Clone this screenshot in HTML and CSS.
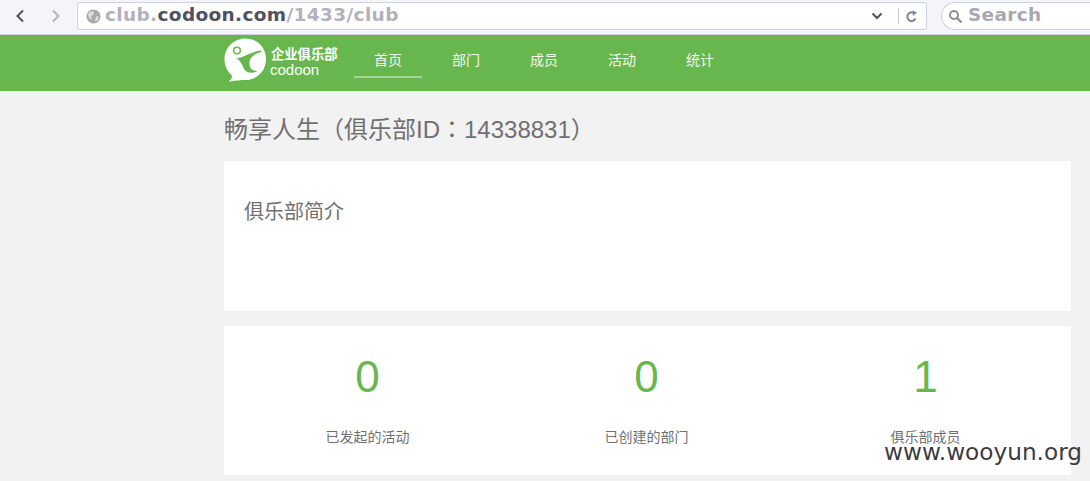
FILE: index.html
```html
<!DOCTYPE html>
<html lang="zh">
<head>
<meta charset="utf-8">
<title>club</title>
<link rel="stylesheet" href="styles.css">
</head>
<body>
<div class="chrome">
  <svg class="nav-ico back" width="12" height="16" viewBox="0 0 12 16"><path d="M9 2.500 3.500 8 9 13.500" fill="none" stroke="#4f5463" stroke-width="2"/></svg>
  <svg class="nav-ico fwd" width="12" height="16" viewBox="0 0 12 16"><path d="M3 2.500 8.500 8 3 13.500" fill="none" stroke="#b4b6bf" stroke-width="2"/></svg>
  <div class="urlbar">
    <svg class="globe" width="15" height="15" viewBox="0 0 15 15"><circle cx="7.500" cy="7.500" r="7" fill="#a9a9a9"/><path d="M3 3.500 7 2 8 5 5 7.500 6 11 3.500 9.500 2 6ZM10 7l3 1-1.500 3.500L9 12.500Z" fill="#dedede"/></svg>
    <span class="url"><span class="dim">club.</span><b class="host">codoon.com</b><span class="dim">/1433/club</span></span>
    <svg class="chev" width="12" height="8" viewBox="0 0 12 8"><path d="M1.500 1.500 6 6l4.500-4.500" fill="none" stroke="#4f5463" stroke-width="2"/></svg>
    <span class="sep"></span>
    <svg class="reload" width="13" height="13" viewBox="0 0 13 13"><path d="M10.500 8.500A4.300 4.300 0 1 1 8.500 2.800" fill="none" stroke="#7c8794" stroke-width="2"/><path d="M7.500 0.500 12 2.500 8 6Z" fill="#7c8794"/></svg>
  </div>
  <div class="search">
    <svg width="15" height="15" viewBox="0 0 15 15"><circle cx="6" cy="6" r="4" fill="none" stroke="#8f8f8f" stroke-width="2"/><path d="M9 9l4.500 4.500" stroke="#8f8f8f" stroke-width="2.400"/></svg>
    <span>Search</span>
  </div>
</div>
<header class="topbar">
  <div class="wrap topbar-in">
    <div class="brand">
      <svg class="logo" width="43" height="44" viewBox="0 0 43 44"><path d="M21.500 0.500C33 .5 42 9.500 42 21C42 33 33 42 21.500 42C17 42 13 42.500 4.500 43.500C8 41 8.500 39 7.500 37C3 33 .5 27.500 .5 21C.5 9.500 10 .5 21.500 .5Z" fill="#fff"/><circle cx="13" cy="12.500" r="3.300" fill="none" stroke="#68b74e" stroke-width="1.500"/><path d="M12 19.500C17 22 24 14 37 12.500L37.500 13.800C29 16.500 25.500 20 25.500 25C25.500 30 28 33 33.500 33C29 36 22 35.500 19.500 30C18 26 17 24 12 19.500Z" fill="#68b74e"/></svg>
      <div class="brand-text"><div class="brand-cn">企业俱乐部</div><div class="brand-en">codoon</div></div>
    </div>
    <nav class="nav">
      <a class="nav-item active">首页</a>
      <a class="nav-item">部门</a>
      <a class="nav-item">成员</a>
      <a class="nav-item">活动</a>
      <a class="nav-item">统计</a>
    </nav>
  </div>
</header>
<main class="wrap">
  <h1 class="title">畅享人生（俱乐部ID<span class="colon" lang="zh-Hant">：</span>14338831）</h1>
  <section class="card intro"><h2>俱乐部简介</h2></section>
  <section class="card stats">
    <div class="stat"><div class="num">0</div><div class="label">已发起的活动</div></div>
    <div class="stat"><div class="num">0</div><div class="label">已创建的部门</div></div>
    <div class="stat"><div class="num">1</div><div class="label">俱乐部成员</div></div>
  </section>
</main>
<div class="watermark">www.wooyun.org</div>
</body>
</html>
```
FILE: styles.css
```css
html, body { margin: 0; padding: 0; }
body {
  width: 1090px; height: 481px; overflow: hidden; position: relative;
  background: #f2f2f2;
  font-family: "Liberation Sans", "Noto Sans CJK SC", sans-serif;
  color: #666;
}
.chrome {
  height: 34px; background: #f4f5f8; border-bottom: 1px solid #cfd1d6;
  display: flex; align-items: flex-start; padding-left: 14px;
  font-family: "DejaVu Sans", sans-serif;
}
.nav-ico { flex: none; margin-top: 8px; }
.fwd { margin-left: 24px; }
.urlbar {
  width: 840px; height: 26px; margin: 2px 0 0 15px; background: #fff;
  border: 1px solid #ccd2e2; border-radius: 3px;
  display: flex; align-items: center; padding-left: 8px;
}
.globe { flex: none; }
.url { margin: -3px 0 0 4px; font-size: 18.500px; letter-spacing: 0.350px; font-weight: 700; flex: 1; white-space: nowrap; }
.dim { color: #b1b2ba; }
.host { color: #50525f; }
.chev { margin-right: 15px; }
.sep { width: 1px; height: 16px; background: #c9ccd2; margin-right: 6px; }
.reload { margin-right: 8px; }
.search {
  margin: 2px 0 0 14px; flex: 1; height: 26px; background: #fff;
  border: 1px solid #ccd2e2; border-right: 0; border-radius: 14px 0 0 14px;
  display: flex; align-items: center; padding-left: 6px; gap: 5px;
  font-size: 18.500px; font-weight: 700; color: #a8a8ae; letter-spacing: .3px;
}
.search span { margin-top: -3px; }
.topbar { height: 56px; background: #68b74e; }
.wrap { width: 847px; margin-left: 224px; }
.topbar-in { display: flex; height: 100%; }
.brand { display: flex; align-items: center; width: 130px; padding-bottom: 1px; box-sizing: border-box; }
.logo { flex: none; margin-top: -6px; }
.brand-text { color: #fff; margin-left: 4px; }
.brand-cn { font-size: 13.300px; line-height: 15px; font-weight: 700; }
.brand-en { font-size: 15px; line-height: 16px; margin-left: -1px; }
.nav { display: flex; gap: 10px; }
.nav-item {
  width: 68px; height: 41px; line-height: 51px; text-align: center;
  color: #f2f8ef; font-size: 14px;
}
.nav-item.active { border-bottom: 2px solid #a5d693; }
.title { margin: 0; padding: 23px 0 16px; font-size: 24px; line-height: 31px; font-weight: 400; color: #707070; }
.colon { font-family: "Noto Sans CJK TC", sans-serif; line-height: 0; }
.card { background: #fff; }
.intro { height: 150px; padding: 38px 20px 0; box-sizing: border-box; margin-bottom: 15px; }
.intro h2 { margin: 0; font-size: 20px; line-height: 27px; font-weight: 400; color: #707070; }
.stats { height: 149px; display: grid; grid-template-columns: repeat(3, 279px); padding-left: 4px; box-sizing: border-box; }
.stat { text-align: center; }
.num { font-size: 44px; line-height: 52px; color: #68b74e; margin-top: 25px; }
.label { font-size: 14px; line-height: 20px; margin-top: 24px; color: #707070; }
.watermark {
  position: absolute; left: 884px; top: 437px;
  font-family: "DejaVu Sans", sans-serif; font-size: 23.200px; line-height: 30px; color: #3c3c3c;
}
```
